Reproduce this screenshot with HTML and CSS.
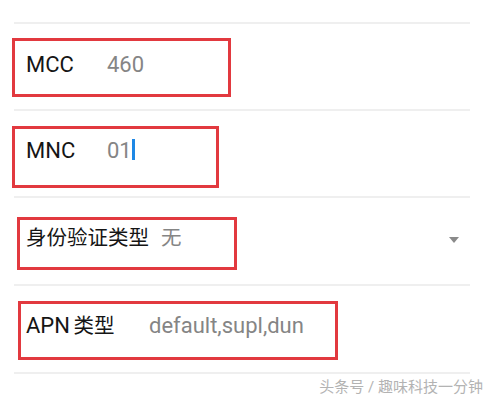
FILE: index.html
```html
<!DOCTYPE html>
<html lang="zh-CN">
<head>
    <meta charset="UTF-8">
    <meta name="viewport" content="width=device-width, initial-scale=1.0">
    <title>APN 设置</title>
    <link rel="stylesheet" href="styles.css">
</head>
<body>
    <div class="apn-list">
        <div class="divider"></div>
        <div class="row row-mcc">
            <div class="field field-mcc">
                <span class="label label-short">MCC</span>
                <span class="value">460</span>
            </div>
        </div>
        <div class="divider"></div>
        <div class="row row-mnc">
            <div class="field field-mnc">
                <span class="label label-short">MNC</span>
                <span class="value">01</span><span class="cursor"></span>
            </div>
        </div>
        <div class="divider"></div>
        <div class="row row-auth">
            <div class="field field-auth">
                <span class="label label-cjk">身份验证类型</span>
                <span class="value">无</span>
            </div>
            <span class="dropdown-arrow"></span>
        </div>
        <div class="divider"></div>
        <div class="row row-type">
            <div class="field field-type">
                <span class="label label-long">APN <span class="cjk">类型</span></span>
                <span class="value">default,supl,dun</span>
            </div>
        </div>
        <div class="divider"></div>
        <div class="watermark">头条号 / 趣味科技一分钟</div>
    </div>
</body>
</html>
```

FILE: styles.css
```css
* {
    margin: 0;
    padding: 0;
    box-sizing: border-box;
}

body {
    font-family: Roboto, 'Noto Sans CJK SC', sans-serif;
    background-color: #ffffff;
    color: #151515;
    width: 492px;
    height: 402px;
    overflow: hidden;
}

.apn-list {
    padding-top: 22px;
}

.divider {
    height: 2px;
    margin: 0 22px 0 14px;
    background-color: #efefef;
}

.row {
    display: flex;
    align-items: flex-start;
}

.row-mcc { height: 85px; }
.row-mnc { height: 85px; }
.row-auth { height: 86px; }
.row-type { height: 86px; }

.field {
    display: flex;
    align-items: flex-start;
    border: 3px solid #e2393f;
    padding-left: 11px;
    font-size: 22px;
    line-height: 22px;
}

.field-mcc {
    margin: 14px 0 0 12px;
    width: 219px;
    height: 59px;
    padding-top: 13px;
}

.field-mnc {
    margin: 15px 0 0 12px;
    width: 207px;
    height: 62px;
    padding-top: 11px;
}

.field-auth {
    margin: 19px 0 0 17px;
    width: 220px;
    height: 53px;
    padding-top: 8px;
    padding-left: 6px;
    font-size: 20.5px;
    line-height: 21px;
}

.field-type {
    margin: 15px 0 0 18px;
    width: 320px;
    height: 59px;
    padding-top: 11px;
    padding-left: 5px;
}

.label {
    color: #151515;
}

.label-short {
    width: 81px;
}

.label-cjk {
    margin-right: 12px;
}

.label-long {
    width: 123px;
    word-spacing: -2px;
}

.cjk {
    font-size: 20.5px;
}

.value {
    color: #858585;
}

.cursor {
    display: inline-block;
    width: 3px;
    height: 21px;
    margin-left: 0;
    margin-top: -1px;
    background-color: #1e88e5;
}

.dropdown-arrow {
    margin: 39px 33px 0 auto;
    width: 0;
    height: 0;
    border-left: 5px solid transparent;
    border-right: 5px solid transparent;
    border-top: 6px solid #8a8a8a;
}

.watermark {
    margin-top: 6px;
    padding-right: 9px;
    text-align: right;
    font-size: 15px;
    line-height: 15px;
    color: #b3b3b3;
}
```
